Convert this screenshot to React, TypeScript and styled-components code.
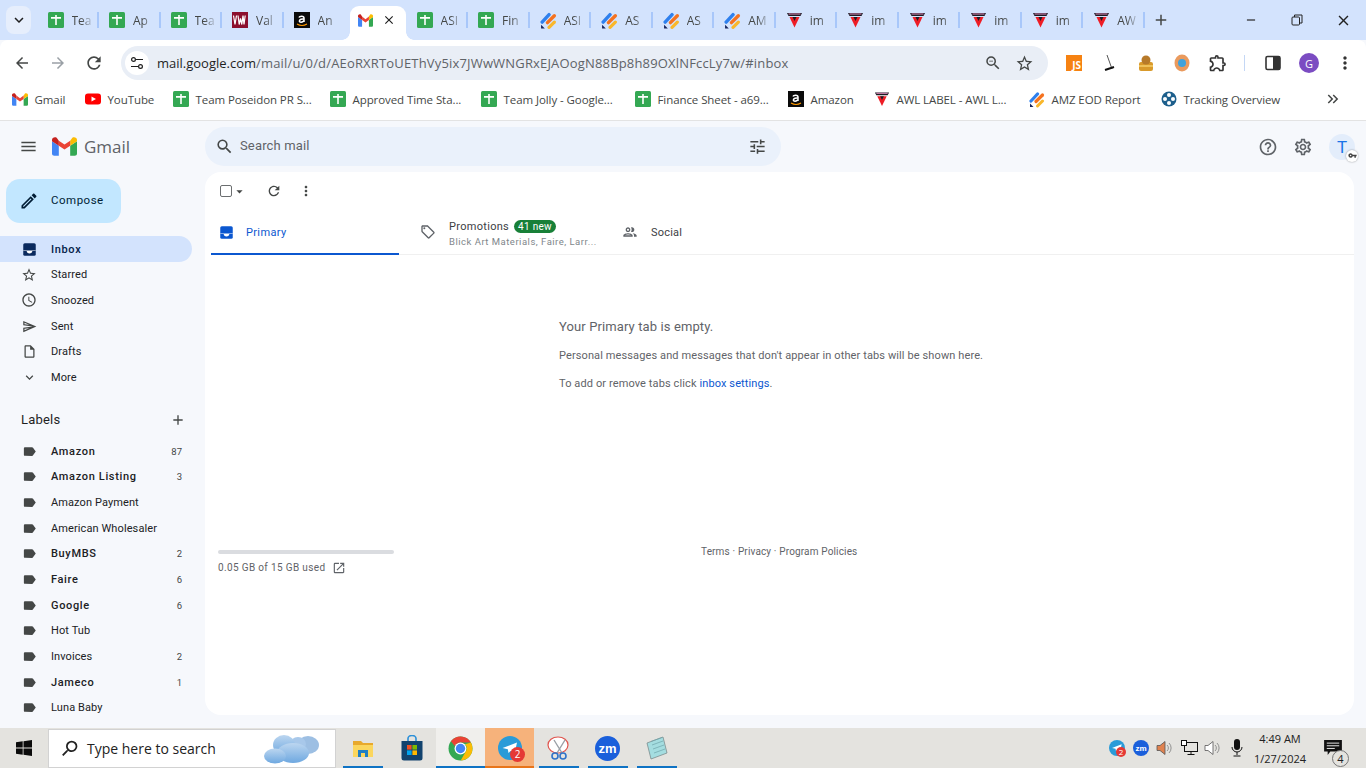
import React from "react";
import styled, { createGlobalStyle } from "styled-components";
import {
  MdAdd,
  MdArrowBack,
  MdArrowDropDown,
  MdArrowForward,
  MdClose,
  MdExpandMore,
  MdHelpOutline,
  MdKeyboardDoubleArrowRight,
  MdLabel,
  MdMenu,
  MdMoreVert,
  MdOpenInNew,
  MdOutlineAccessTime,
  MdOutlineCreate,
  MdOutlineExtension,
  MdOutlineInsertDriveFile,
  MdOutlineLocalOffer,
  MdOutlinePeople,
  MdOutlineSend,
  MdOutlineSettings,
  MdOutlineStarBorder,
  MdOutlineZoomOut,
  MdRefresh,
  MdRemove,
  MdSearch,
  MdStarBorder,
  MdTune,
  MdVpnKey,
} from "react-icons/md";

const GlobalStyle = createGlobalStyle`
  html, body {
    margin: 0;
    padding: 0;
    height: 100%;
    overflow: hidden;
    background: #f6f8fc;
    font-family: "Roboto", "Liberation Sans", sans-serif;
  }
  * { box-sizing: border-box; }
`;

const chromeFont = `"Open Sans", "Noto Sans", sans-serif`;

/* ---------- drawn favicons and logos ---------- */

type IconKind = "sheets" | "vw" | "amazon" | "gmail" | "jira" | "awl" | "youtube" | "tracking";

function GmailLogo({ width, height }: { width: number; height: number }) {
  return (
    <svg width={width} height={height} viewBox="2 3.500 44 38" preserveAspectRatio="none">
      <path fill="#4285f4" d="M6 41h8V21L2 12v25c0 2.2 1.8 4 4 4z" />
      <path fill="#34a853" d="M34 41h8c2.2 0 4-1.800 4-4V12l-12 9z" />
      <path fill="#fbbc04" d="M34 11v10l12-9V9c0-4.200-4.800-6.600-8.200-4.100z" />
      <path fill="#ea4335" d="M14 21V11l10 7.500L34 11v10l-10 7.500z" />
      <path fill="#c5221f" d="M2 9v3l12 9V11L10.200 4.900C6.800 2.400 2 4.800 2 9z" />
    </svg>
  );
}

function Favicon({ kind }: { kind: IconKind }) {
  switch (kind) {
    case "sheets":
      return (
        <svg width="16" height="16" viewBox="0 0 16 16">
          <rect width="16" height="16" rx="1.500" fill="#34a853" />
          <path fill="#fff" d="M7.200 3h1.600v2H13v1.700H8.800V13H7.200V6.700H3V5h4.200z" />
        </svg>
      );
    case "vw":
      return (
        <svg width="16" height="16" viewBox="0 0 16 16">
          <rect width="16" height="16" fill="#8c0f2e" />
          <path
            d="M1.500 3.500l1.500 9 1.500-9M6 3.500l1.200 9 1.300-6 1.300 6 1.200-9M11 3.500l1 9 1.200-9"
            stroke="#fff"
            strokeWidth="1.200"
            fill="none"
          />
        </svg>
      );
    case "amazon":
      return (
        <svg width="16" height="16" viewBox="0 0 16 16">
          <rect width="16" height="16" fill="#0b0b0b" />
          <path
            d="M5 5.500c.4-1.500 5-2 5 .5v4M10 7c-2-.2-4.600.1-4.600 2 0 1.800 3 1.600 4.600-.2"
            stroke="#fff"
            strokeWidth="1.500"
            fill="none"
          />
          <path d="M3 12c3 1.800 7 1.800 10 0" stroke="#f90" strokeWidth="1.100" fill="none" />
        </svg>
      );
    case "gmail":
      return <GmailLogo width={15} height={13} />;
    case "jira":
      return (
        <svg width="17" height="17" viewBox="0 0 16 16">
          <path d="M2 9.500L8.500 2.500" stroke="#2f80ed" strokeWidth="3.200" strokeLinecap="round" />
          <path d="M7 10L13.500 3.500" stroke="#f5721f" strokeWidth="3.200" strokeLinecap="round" />
          <path d="M8.500 14.500l5-5" stroke="#f9b72b" strokeWidth="3" strokeLinecap="round" />
          <path d="M1 15.500V12l3.500 3.500z" fill="#16235a" />
        </svg>
      );
    case "awl":
      return (
        <svg width="17" height="16" viewBox="0 0 17 16">
          <path d="M1 1h15l-1.500 3h-12z" fill="#1c1c24" />
          <path d="M2.500 2h12" stroke="#e78fc0" strokeWidth="1" />
          <path d="M3.500 5h10L8.500 15.500z" fill="#ee1c25" />
          <path d="M6.500 5h4L8.500 9z" fill="#1c1c24" />
        </svg>
      );
    case "youtube":
      return (
        <svg width="16" height="16" viewBox="0 0 16 16">
          <rect y="2.500" width="16" height="11" rx="3" fill="#f00" />
          <path d="M6.500 5.500L11 8l-4.500 2.500z" fill="#fff" />
        </svg>
      );
    case "tracking":
      return (
        <svg width="16" height="16" viewBox="0 0 16 16">
          <circle cx="8" cy="8" r="7.500" fill="#1d5f8c" />
          <circle cx="8" cy="4" r="2" fill="#fff" />
          <circle cx="8" cy="12" r="2" fill="#fff" />
          <circle cx="4" cy="8" r="2" fill="#fff" />
          <circle cx="12" cy="8" r="2" fill="#fff" />
        </svg>
      );
  }
}

function ChromeLogo() {
  return (
    <svg width="25" height="25" viewBox="0 0 24 24">
      <circle cx="12" cy="12" r="11.500" fill="#34a853" />
      <path d="M12 .5a11.500 11.500 0 0 1 10 5.800H12a5.700 5.700 0 0 0-5.300 3.500L2.800 5.100A11.500 11.500 0 0 1 12 .5z" fill="#ea4335" />
      <path d="M22 6.300a11.500 11.500 0 0 1-9.800 17.200l4.700-8.500A5.700 5.700 0 0 0 16.500 8z" fill="#fbbc04" />
      <circle cx="12" cy="12" r="5.700" fill="#fff" />
      <circle cx="12" cy="12" r="4.500" fill="#4285f4" />
    </svg>
  );
}

function ExplorerIcon() {
  return (
    <svg width="24" height="24" viewBox="0 0 24 24">
      <path d="M2 5h8l2 2h10v5H2z" fill="#e8a92c" />
      <path d="M2 9h20v12H2z" fill="#fbd65d" />
      <path d="M7 21v-7h10v7h-3v-4h-4v4z" fill="#1f7fc4" />
    </svg>
  );
}

function StoreIcon() {
  return (
    <svg width="24" height="26" viewBox="0 0 24 26">
      <path d="M8 6V3.500a4 3 0 0 1 8 0V6" stroke="#2a8fd8" strokeWidth="1.600" fill="none" />
      <path d="M1.500 6h21v17a2.500 2.500 0 0 1-2.500 2.500H4A2.500 2.500 0 0 1 1.500 23z" fill="#12436e" />
      <rect x="7" y="10" width="4.600" height="4.600" fill="#f25022" />
      <rect x="12.400" y="10" width="4.600" height="4.600" fill="#7fba00" />
      <rect x="7" y="15.400" width="4.600" height="4.600" fill="#00a4ef" />
      <rect x="12.400" y="15.400" width="4.600" height="4.600" fill="#ffb900" />
    </svg>
  );
}

function SnipIcon() {
  return (
    <svg width="26" height="26" viewBox="0 0 26 26">
      <ellipse cx="12" cy="10" rx="10" ry="8" fill="#fff" stroke="#e0564f" strokeWidth="1.200" />
      <path d="M8 5l8 13M19 5l-8 13" stroke="#9aa0a6" strokeWidth="1.400" />
      <circle cx="9" cy="21" r="3" fill="none" stroke="#2f73c9" strokeWidth="1.600" />
      <circle cx="17" cy="21" r="3" fill="none" stroke="#2f73c9" strokeWidth="1.600" />
    </svg>
  );
}

function NotepadIcon() {
  return (
    <svg width="26" height="26" viewBox="0 0 26 26">
      <path d="M3 8L19 2l4 16-16 6z" fill="#a4dde0" stroke="#7b8d8e" strokeWidth=".8" />
      <path d="M7 6.500L18 2.500M8 10l11-4M9 14l11-4M10 18l11-4" stroke="#6fa5ab" strokeWidth=".7" />
    </svg>
  );
}

function TelegramIcon({ size }: { size: number }) {
  return (
    <svg width={size} height={size} viewBox="0 0 24 24">
      <circle cx="12" cy="12" r="12" fill="#2a9bd8" />
      <path d="M4.500 12L19 6.500 16.500 18l-4-3-2 2-.7-3.800z" fill="#fff" />
    </svg>
  );
}

function CloudsIcon() {
  return (
    <svg width="58" height="34" viewBox="0 0 58 34">
      <defs>
        <linearGradient id="cloud" x1="0" y1="0" x2="0" y2="1">
          <stop offset="0" stopColor="#bcd6f0" />
          <stop offset="1" stopColor="#6ea8e0" />
        </linearGradient>
      </defs>
      <ellipse cx="45" cy="13" rx="11" ry="9" fill="#9dbfe3" />
      <ellipse cx="35" cy="12" rx="8" ry="7" fill="#a8c8ea" />
      <ellipse cx="21" cy="13" rx="11" ry="10" fill="url(#cloud)" />
      <ellipse cx="30" cy="21" rx="16" ry="10" fill="url(#cloud)" />
      <ellipse cx="12" cy="24" rx="11" ry="7.500" fill="url(#cloud)" />
    </svg>
  );
}

function WindowsLogo() {
  return (
    <svg width="16" height="16" viewBox="0 0 16 16">
      <path fill="#0b0b0b" d="M0 2.200l6.700-.9v6.300H0zM7.500 1.200L16 0v7.600H7.500zM0 8.400h6.700v6.300L0 13.800zM7.500 8.400H16V16l-8.500-1.200z" />
    </svg>
  );
}

function SiteTuneIcon() {
  return (
    <svg width="14" height="14" viewBox="0 0 14 14">
      <circle cx="3.500" cy="3.500" r="1.900" fill="none" stroke="#1f1f1f" strokeWidth="1.200" />
      <path d="M6 3.500h7M1 10.500h7" stroke="#1f1f1f" strokeWidth="1.200" />
      <circle cx="10.500" cy="10.500" r="1.900" fill="none" stroke="#1f1f1f" strokeWidth="1.200" />
    </svg>
  );
}

function InboxIcon({ color }: { color: string }) {
  return (
    <svg width="15" height="15" viewBox="0 0 24 24">
      <rect x="2" y="2" width="20" height="20" rx="2.500" fill={color} />
      <path d="M2 14.500h5.500c0 2.500 2 4 4.500 4s4.500-1.500 4.500-4H22v-1H2z" fill="#fff" />
      <path d="M8 14.500h8c0 1.800-1.800 2.800-4 2.800s-4-1-4-2.800z" fill="#fff" />
    </svg>
  );
}

function RestoreIcon() {
  return (
    <svg width="12" height="12" viewBox="0 0 12 12">
      <rect x="1" y="3" width="7.500" height="8" rx="1" fill="none" stroke="#222" />
      <path d="M3.500 3V1h7.500v8h-2.500" fill="none" stroke="#222" />
    </svg>
  );
}

function SpeakerIcon({ color }: { color: string }) {
  return (
    <svg width="18" height="16" viewBox="0 0 18 16">
      <path d="M1 5.500h3L9 1.500v13l-5-4H1z" fill={color} stroke="#555" strokeWidth=".8" />
      <path d="M11 5a4 4 0 0 1 0 6M13 3a7 7 0 0 1 0 10" fill="none" stroke="#888" strokeWidth=".9" />
    </svg>
  );
}

/* ---------- data ---------- */

type TabItem = { kind: IconKind; title: string; active?: boolean; noSep?: boolean };

const tabs: TabItem[] = [
  { kind: "sheets", title: "Tea" },
  { kind: "sheets", title: "Ap" },
  { kind: "sheets", title: "Tea" },
  { kind: "vw", title: "Val" },
  { kind: "amazon", title: "An", noSep: true },
  { kind: "gmail", title: "", active: true, noSep: true },
  { kind: "sheets", title: "ASI" },
  { kind: "sheets", title: "Fin" },
  { kind: "jira", title: "ASI" },
  { kind: "jira", title: "AS" },
  { kind: "jira", title: "AS" },
  { kind: "jira", title: "AM" },
  { kind: "awl", title: "im" },
  { kind: "awl", title: "im" },
  { kind: "awl", title: "im" },
  { kind: "awl", title: "im" },
  { kind: "awl", title: "im" },
  { kind: "awl", title: "AW" },
];

const bookmarks: { kind: IconKind; label: string; width: number }[] = [
  { kind: "gmail", label: "Gmail", width: 73 },
  { kind: "youtube", label: "YouTube", width: 88 },
  { kind: "sheets", label: "Team Poseidon PR S...", width: 157 },
  { kind: "sheets", label: "Approved Time Sta...", width: 151 },
  { kind: "sheets", label: "Team Jolly - Google...", width: 154 },
  { kind: "sheets", label: "Finance Sheet - a69...", width: 153 },
  { kind: "amazon", label: "Amazon", width: 86 },
  { kind: "awl", label: "AWL LABEL - AWL L...", width: 155 },
  { kind: "jira", label: "AMZ EOD Report", width: 132 },
  { kind: "tracking", label: "Tracking Overview", width: 150 },
];

const navItems: { label: string; icon: React.ReactNode; active?: boolean }[] = [
  { label: "Inbox", active: true, icon: <InboxIcon color="#0a2a5e" /> },
  { label: "Starred", icon: <MdOutlineStarBorder size={16} /> },
  { label: "Snoozed", icon: <MdOutlineAccessTime size={16} /> },
  { label: "Sent", icon: <MdOutlineSend size={15} /> },
  { label: "Drafts", icon: <MdOutlineInsertDriveFile size={15} /> },
  { label: "More", icon: <MdExpandMore size={15} /> },
];

const labels: { name: string; count?: string; bold?: boolean }[] = [
  { name: "Amazon", count: "87", bold: true },
  { name: "Amazon Listing", count: "3", bold: true },
  { name: "Amazon Payment" },
  { name: "American Wholesaler" },
  { name: "BuyMBS", count: "2", bold: true },
  { name: "Faire", count: "6", bold: true },
  { name: "Google", count: "6", bold: true },
  { name: "Hot Tub" },
  { name: "Invoices", count: "2" },
  { name: "Jameco", count: "1", bold: true },
  { name: "Luna Baby" },
  { name: "Leads" },
];

/* ---------- app ---------- */

export default function App() {
  return (
    <Page>
      <GlobalStyle />

      <TabStrip>
        <TabSearch>
          <MdExpandMore size={18} />
        </TabSearch>
        {tabs.map((tab, i) => (
          <Tab key={i} $active={tab.active} $noSep={tab.noSep}>
            {tab.active && <ActiveShape />}
            <TabIcon>
              <Favicon kind={tab.kind} />
            </TabIcon>
            {tab.active ? (
              <TabClose>
                <MdClose size={14} />
              </TabClose>
            ) : (
              <TabTitle>{tab.title}</TabTitle>
            )}
          </Tab>
        ))}
        <NewTab>
          <MdAdd size={18} />
        </NewTab>
        <WindowControls>
          <WindowButton>
            <MdRemove size={14} />
          </WindowButton>
          <WindowButton>
            <RestoreIcon />
          </WindowButton>
          <WindowButton>
            <MdClose size={17} />
          </WindowButton>
        </WindowControls>
      </TabStrip>

      <Toolbar>
        <NavButton>
          <MdArrowBack size={18} />
        </NavButton>
        <NavButton $disabled>
          <MdArrowForward size={18} />
        </NavButton>
        <NavButton>
          <MdRefresh size={20} />
        </NavButton>
        <Omnibox>
          <SiteInfo>
            <SiteTuneIcon />
          </SiteInfo>
          <Url>
            <strong>mail.google.com</strong>/mail/u/0/d/AEoRXRToUEThVy5ix7JWwWNGRxEJAOogN88Bp8h89OXlNFccLy7w/#inbox
          </Url>
          <OmniActions>
            <MdOutlineZoomOut size={18} />
            <MdStarBorder size={19} />
          </OmniActions>
        </Omnibox>
        <ExtButtons>
          <ExtButton>
            <JsBadge>JS</JsBadge>
          </ExtButton>
          <ExtButton>
            <svg width="16" height="18" viewBox="0 0 16 18">
              <path d="M5 1l5 14" stroke="#555" strokeWidth="1" />
              <path d="M3 16l9-3" stroke="#111" strokeWidth="2" />
            </svg>
          </ExtButton>
          <ExtButton>
            <svg width="18" height="18" viewBox="0 0 18 18">
              <rect x="2" y="8" width="14" height="9" rx="2" fill="#d99a2b" />
              <circle cx="9" cy="6" r="4.500" fill="#b77a2a" />
              <rect x="2" y="11" width="14" height="2" fill="#efc15a" />
            </svg>
          </ExtButton>
          <ExtButton>
            <svg width="16" height="18" viewBox="0 0 16 18">
              <ellipse cx="8" cy="9" rx="7.500" ry="8.500" fill="#ea9a5d" />
              <circle cx="8" cy="9" r="4" fill="#3fa2dc" />
            </svg>
          </ExtButton>
          <ExtButton>
            <MdOutlineExtension size={20} />
          </ExtButton>
          <ToolbarSep />
          <ExtButton>
            <svg width="16" height="16" viewBox="0 0 16 16">
              <rect x="1" y="1.500" width="14" height="13" rx="1.500" fill="none" stroke="#333" strokeWidth="1.600" />
              <rect x="8" y="1.500" width="7" height="13" fill="#333" />
            </svg>
          </ExtButton>
          <ExtButton>
            <ProfileCircle>G</ProfileCircle>
          </ExtButton>
          <ExtButton>
            <MdMoreVert size={20} />
          </ExtButton>
        </ExtButtons>
      </Toolbar>

      <BookmarkBar>
        {bookmarks.map((b) => (
          <Bookmark key={b.label} $width={b.width}>
            <Favicon kind={b.kind} />
            <BookmarkLabel>{b.label}</BookmarkLabel>
          </Bookmark>
        ))}
        <BookmarkMore>
          <MdKeyboardDoubleArrowRight size={18} />
        </BookmarkMore>
      </BookmarkBar>

      <GmailShell>
        <GmailHeader>
          <Brand>
            <HeaderIcon>
              <MdMenu size={19} />
            </HeaderIcon>
            <GmailLogo width={25} height={19} />
            <BrandName>Gmail</BrandName>
          </Brand>
          <SearchBar>
            <MdSearch size={19} />
            <SearchText>Search mail</SearchText>
            <MdTune size={19} />
          </SearchBar>
          <HeaderRight>
            <HeaderButton>
              <MdHelpOutline size={20} />
            </HeaderButton>
            <HeaderButton>
              <MdOutlineSettings size={20} />
            </HeaderButton>
            <Avatar>
              T
              <AvatarKey>
                <MdVpnKey size={9} />
              </AvatarKey>
            </Avatar>
          </HeaderRight>
        </GmailHeader>

        <GmailBody>
          <Sidebar>
            <Compose>
              <MdOutlineCreate size={20} />
              <span>Compose</span>
            </Compose>
            <NavList>
              {navItems.map((item) => (
                <NavRow key={item.label} $active={item.active}>
                  <NavIcon>{item.icon}</NavIcon>
                  <NavLabel $bold={item.active}>{item.label}</NavLabel>
                </NavRow>
              ))}
            </NavList>
            <LabelsHeader>
              <span>Labels</span>
              <MdAdd size={16} />
            </LabelsHeader>
            <NavList>
              {labels.map((label) => (
                <NavRow key={label.name}>
                  <NavIcon>
                    <MdLabel size={15} color="#444746" />
                  </NavIcon>
                  <NavLabel $bold={label.bold}>{label.name}</NavLabel>
                  {label.count && <Count>{label.count}</Count>}
                </NavRow>
              ))}
            </NavList>
          </Sidebar>

          <MainPanel>
            <MailToolbar>
              <CheckBox />
              <MdArrowDropDown size={15} color="#444746" />
              <ToolIcon $gap={19}>
                <MdRefresh size={16} />
              </ToolIcon>
              <ToolIcon $gap={16}>
                <MdMoreVert size={16} />
              </ToolIcon>
            </MailToolbar>

            <CategoryTabs>
              <PrimaryTab>
                <InboxIcon color="#0b57d0" />
                <span>Primary</span>
              </PrimaryTab>
              <PromotionsTab>
                <MdOutlineLocalOffer size={16} />
                <PromoText>
                  <PromoTitle>
                    Promotions <NewBadge>41 new</NewBadge>
                  </PromoTitle>
                  <PromoSub>Blick Art Materials, Faire, Larr...</PromoSub>
                </PromoText>
              </PromotionsTab>
              <SocialTab>
                <MdOutlinePeople size={16} />
                <span>Social</span>
              </SocialTab>
            </CategoryTabs>

            <EmptyState>
              <EmptyTitle>Your Primary tab is empty.</EmptyTitle>
              <EmptyLine>Personal messages and messages that don't appear in other tabs will be shown here.</EmptyLine>
              <EmptyLine>
                To add or remove tabs click <EmptyLink>inbox settings</EmptyLink>.
              </EmptyLine>
            </EmptyState>

            <PanelFooter>
              <Storage>
                <StorageBar />
                <StorageText>
                  0.05 GB of 15 GB used
                  <MdOpenInNew size={14} />
                </StorageText>
              </Storage>
              <Policies>Terms · Privacy · Program Policies</Policies>
            </PanelFooter>
          </MainPanel>
        </GmailBody>
      </GmailShell>

      <Taskbar>
        <StartButton>
          <WindowsLogo />
        </StartButton>
        <TaskSearch>
          <MdSearch size={21} />
          <TaskSearchText>Type here to search</TaskSearchText>
          <CloudsIcon />
        </TaskSearch>
        <TaskIcons>
          <TaskIcon $state="open">
            <ExplorerIcon />
          </TaskIcon>
          <TaskIcon>
            <StoreIcon />
          </TaskIcon>
          <TaskIcon $state="focused">
            <ChromeLogo />
          </TaskIcon>
          <TaskIcon $state="alert">
            <TelegramIcon size={24} />
            <RedBadge>2</RedBadge>
          </TaskIcon>
          <TaskIcon $state="open">
            <SnipIcon />
          </TaskIcon>
          <TaskIcon $state="open">
            <ZoomBadge $size={25}>zm</ZoomBadge>
          </TaskIcon>
          <TaskIcon $state="open">
            <NotepadIcon />
          </TaskIcon>
        </TaskIcons>
        <Tray>
          <TrayIcon>
            <TelegramIcon size={16} />
            <TrayRedBadge>2</TrayRedBadge>
          </TrayIcon>
          <TrayIcon>
            <ZoomBadge $size={16}>zm</ZoomBadge>
          </TrayIcon>
          <TrayIcon>
            <SpeakerIcon color="#e0824f" />
          </TrayIcon>
          <TrayIcon>
            <svg width="17" height="16" viewBox="0 0 17 16">
              <rect x="3.500" y="2.500" width="13" height="9" fill="none" stroke="#111" />
              <path d="M10 11.500v3M6.500 14.500h7" stroke="#111" />
              <rect x=".5" y=".5" width="5" height="5" fill="#fff" stroke="#111" />
            </svg>
          </TrayIcon>
          <TrayIcon>
            <SpeakerIcon color="#fff" />
          </TrayIcon>
          <TrayIcon>
            <svg width="12" height="18" viewBox="0 0 12 18">
              <rect x="3" y="0" width="6" height="11" rx="3" fill="#111" />
              <path d="M1 8a5 5 0 0 0 10 0M6 13v3M2.500 17h7" stroke="#111" fill="none" />
            </svg>
          </TrayIcon>
          <Clock>
            <span>4:49 AM</span>
            <span>1/27/2024</span>
          </Clock>
          <Notifications>
            <svg width="18" height="16" viewBox="0 0 20 18">
              <path d="M0 0h20v13H7l-3 4v-4H0z" fill="#111" />
              <path d="M3 3.500h14M3 6.500h14M3 9.500h9" stroke="#fff" />
            </svg>
            <NotifCount>4</NotifCount>
          </Notifications>
        </Tray>
      </Taskbar>
    </Page>
  );
}

/* ---------- chrome: tab strip ---------- */

const Page = styled.div`
  display: flex;
  flex-direction: column;
  width: 1366px;
  height: 768px;
  overflow: hidden;
`;

const TabStrip = styled.div`
  display: flex;
  align-items: stretch;
  height: 40px;
  background: #d3e3fd;
  font-family: ${chromeFont};
`;

const TabSearch = styled.div`
  display: grid;
  place-items: center;
  width: 25px;
  height: 28px;
  margin: 6px 6.500px 0 6px;
  border-radius: 8px;
  background: #e6eefc;
  color: #1f1f1f;
`;

const Tab = styled.div<{ $active?: boolean; $noSep?: boolean }>`
  position: relative;
  display: flex;
  align-items: center;
  flex: 0 0 61.530px;
  padding-left: ${({ $active }) => ($active ? "13px" : "10px")};
  padding-right: ${({ $active }) => ($active ? "11px" : "0")};

  &::after {
    content: "";
    display: ${({ $noSep }) => ($noSep ? "none" : "block")};
    position: absolute;
    right: 0;
    top: 12px;
    width: 2px;
    height: 16px;
    background: #a8c7fa;
  }
`;

const ActiveShape = styled.div`
  position: absolute;
  left: 5px;
  right: 1px;
  top: 6px;
  bottom: 0;
  background: #fff;
  border-radius: 9px 9px 0 0;

  &::before,
  &::after {
    content: "";
    position: absolute;
    bottom: 0;
    width: 8px;
    height: 8px;
    background: radial-gradient(circle at var(--cx) 0, #d3e3fd 7.500px, #fff 8px);
  }
  &::before {
    --cx: 0;
    left: -8px;
  }
  &::after {
    --cx: 100%;
    right: -8px;
  }
`;

const TabIcon = styled.span`
  position: relative;
  display: flex;
  align-items: center;
  flex: none;
  width: 17px;
`;

const TabTitle = styled.span`
  width: 26px;
  margin-left: 7px;
  overflow: hidden;
  white-space: nowrap;
  font-size: 12px;
  color: #444746;
  -webkit-mask-image: linear-gradient(90deg, #000 9px, rgba(0, 0, 0, 0.25) 19px);
  mask-image: linear-gradient(90deg, #000 9px, rgba(0, 0, 0, 0.25) 19px);
`;

const TabClose = styled.span`
  position: relative;
  display: flex;
  margin-left: auto;
  color: #1f1f1f;
`;

const NewTab = styled.div`
  display: flex;
  align-items: center;
  margin-left: 7px;
  color: #444746;
`;

const WindowControls = styled.div`
  display: flex;
  margin-left: auto;
`;

const WindowButton = styled.div`
  display: grid;
  place-items: center;
  width: 46px;
  color: #222;
`;

/* ---------- chrome: toolbar ---------- */

const Toolbar = styled.div`
  display: flex;
  align-items: center;
  height: 40px;
  padding: 6px 0 0 4px;
  background: #fff;
  border-radius: 8px 8px 0 0;
  font-family: ${chromeFont};
`;

const NavButton = styled.div<{ $disabled?: boolean }>`
  display: grid;
  place-items: center;
  width: 36px;
  height: 34px;
  color: ${({ $disabled }) => ($disabled ? "#9aa0a6" : "#444746")};
`;

const Omnibox = styled.div`
  display: flex;
  align-items: center;
  width: 927px;
  height: 34px;
  margin-left: 9px;
  padding: 0 14px 0 4px;
  border-radius: 17px;
  background: #e9eef6;
`;

const SiteInfo = styled.div`
  display: grid;
  place-items: center;
  width: 24px;
  height: 24px;
  border-radius: 50%;
  background: #fff;
  color: #1f1f1f;
`;

const Url = styled.div`
  margin-left: 8px;
  font-size: 13px;
  letter-spacing: 0.170px;
  color: #5f6368;
  white-space: nowrap;

  strong {
    font-weight: 400;
    letter-spacing: 0;
    color: #1f1f1f;
  }
`;

const OmniActions = styled.div`
  display: flex;
  align-items: center;
  gap: 13px;
  margin-left: auto;
  color: #444746;
`;

const ExtButtons = styled.div`
  display: flex;
  align-items: center;
  margin-left: 8px;
`;

const ExtButton = styled.div`
  display: grid;
  place-items: center;
  width: 36px;
  height: 32px;
  color: #333;
`;

const ToolbarSep = styled.div`
  width: 1px;
  height: 16px;
  margin: 0 10px 0 8px;
  background: #c4d7f5;
`;

const JsBadge = styled.div`
  display: flex;
  align-items: flex-end;
  justify-content: flex-end;
  width: 16px;
  height: 16px;
  padding: 0 1px 1px 0;
  background: #f68212;
  color: #fff;
  font-size: 10px;
  font-weight: 700;
  line-height: 1;
`;

const ProfileCircle = styled.div`
  display: grid;
  place-items: center;
  width: 20px;
  height: 20px;
  border-radius: 50%;
  background: #7b4cc2;
  color: #fff;
  font-size: 11px;
`;

/* ---------- chrome: bookmarks ---------- */

const BookmarkBar = styled.div`
  display: flex;
  align-items: center;
  height: 41px;
  padding: 0 0 2px 12px;
  background: #fff;
  border-bottom: 1px solid #e3e3e3;
  font-family: ${chromeFont};
`;

const Bookmark = styled.div<{ $width: number }>`
  display: flex;
  align-items: center;
  gap: 6.500px;
  flex: 0 0 ${({ $width }) => $width}px;

  svg {
    flex: 0 0 16px;
  }
`;

const BookmarkLabel = styled.span`
  font-size: 11.500px;
  letter-spacing: -0.080px;
  color: #444746;
  white-space: nowrap;
`;

const BookmarkMore = styled.div`
  display: flex;
  margin-left: 13px;
  color: #444746;
`;

/* ---------- gmail: header ---------- */

const GmailShell = styled.div`
  display: flex;
  flex-direction: column;
  flex: 1;
  min-height: 0;
  background: #f6f8fc;
`;

const GmailHeader = styled.div`
  display: flex;
  align-items: flex-start;
  height: 51px;
  flex: none;
`;

const Brand = styled.div`
  display: flex;
  align-items: center;
  width: 205px;
  height: 51px;
  padding-left: 19px;
  flex: none;
`;

const HeaderIcon = styled.div`
  display: flex;
  width: 33px;
  color: #444746;
`;

const BrandName = styled.span`
  margin-left: 7px;
  font-family: "Open Sans", sans-serif;
  font-size: 17px;
  color: #5f6368;
`;

const SearchBar = styled.div`
  display: flex;
  align-items: center;
  width: 576px;
  height: 39px;
  margin-top: 6px;
  padding: 0 14px 0 10px;
  border-radius: 20px;
  background: #eaf1fb;
  color: #444746;
`;

const SearchText = styled.span`
  flex: 1;
  margin: 0 0 2px 6px;
  font-size: 13px;
  letter-spacing: 0.150px;
  color: #5f6368;
`;

const HeaderRight = styled.div`
  display: flex;
  align-items: center;
  margin-left: auto;
  height: 51px;
  padding-right: 11px;
`;

const HeaderButton = styled.div`
  display: grid;
  place-items: center;
  width: 35px;
  color: #5f6368;
`;

const Avatar = styled.div`
  position: relative;
  display: grid;
  place-items: center;
  width: 26px;
  height: 26px;
  margin-left: 9px;
  border-radius: 50%;
  background: #e3edfb;
  color: #1a73e8;
  font-size: 17px;
`;

const AvatarKey = styled.span`
  position: absolute;
  right: -3px;
  bottom: -2px;
  display: grid;
  place-items: center;
  width: 12px;
  height: 12px;
  border-radius: 50%;
  background: #fff;
  color: #444;
  box-shadow: 0 0 2px rgba(0, 0, 0, 0.4);
`;

/* ---------- gmail: sidebar ---------- */

const GmailBody = styled.div`
  display: flex;
  flex: 1;
  min-height: 0;
`;

const Sidebar = styled.div`
  flex: 0 0 205px;
  height: 100%;
  overflow: hidden;
`;

const Compose = styled.div`
  display: flex;
  align-items: center;
  gap: 12px;
  width: 115px;
  height: 44px;
  margin: 7px 0 13.300px 6px;
  padding: 0 0 2px 13px;
  border-radius: 14px;
  background: #c2e7ff;
  font-size: 11.500px;
  letter-spacing: 0.500px;
  color: #001d35;

  svg {
    margin-top: 2px;
  }
`;

const NavList = styled.div`
  display: flex;
  flex-direction: column;
`;

const NavRow = styled.div<{ $active?: boolean }>`
  display: flex;
  align-items: center;
  width: 192px;
  height: 25.670px;
  padding: 0 10px 0 21px;
  border-radius: 0 13px 13px 0;
  color: ${({ $active }) => ($active ? "#041e49" : "#202124")};
  background: ${({ $active }) => ($active ? "#d3e3fd" : "transparent")};
`;

const NavIcon = styled.span`
  display: flex;
  justify-content: center;
  width: 16px;
  margin-right: 14px;
  color: #444746;
`;

const NavLabel = styled.span<{ $bold?: boolean }>`
  flex: 1;
  font-size: 11px;
  letter-spacing: ${({ $bold }) => ($bold ? "0.650px" : "0.100px")};
  font-weight: ${({ $bold }) => ($bold ? 500 : 400)};
  white-space: nowrap;
`;

const Count = styled.span`
  font-size: 9.500px;
  color: #444746;
`;

const LabelsHeader = styled.div`
  display: flex;
  align-items: center;
  justify-content: space-between;
  width: 192px;
  height: 20px;
  margin: 20px 0 8.200px;
  padding: 0 6px 0 21px;
  font-size: 13px;
  letter-spacing: 0.200px;
  color: #1f1f1f;

  span {
    margin-bottom: 2px;
  }

  svg {
    color: #444746;
  }
`;

/* ---------- gmail: main panel ---------- */

const MainPanel = styled.div`
  flex: 0 0 1149px;
  margin-bottom: 13px;
  border-radius: 16px;
  background: #fff;
`;

const MailToolbar = styled.div`
  display: flex;
  align-items: center;
  height: 38px;
  padding-left: 15px;
`;

const CheckBox = styled.span`
  width: 12px;
  height: 12px;
  border: 1.500px solid #6b6e70;
  border-radius: 2px;
`;

const ToolIcon = styled.span<{ $gap: number }>`
  display: flex;
  margin-left: ${({ $gap }) => $gap}px;
  color: #444746;
`;

const CategoryTabs = styled.div`
  display: flex;
  height: 45px;
  margin-left: 6px;
  border-bottom: 1px solid #f0f0f0;
  font-size: 11px;
  letter-spacing: 0.200px;
`;

const PrimaryTab = styled.div`
  display: flex;
  align-items: center;
  gap: 12px;
  width: 188px;
  height: 45px;
  padding: 1px 0 0 8px;
  border-bottom: 2px solid #0b57d0;
  color: #0b57d0;
  letter-spacing: 0.350px;
`;

const PromotionsTab = styled.div`
  display: flex;
  align-items: center;
  gap: 13px;
  width: 223px;
  padding-left: 21px;
  color: #5f6368;
`;

const PromoText = styled.div`
  display: flex;
  flex-direction: column;
  gap: 3px;
  padding-top: 2px;
`;

const PromoTitle = styled.div`
  display: flex;
  align-items: center;
  gap: 5px;
  letter-spacing: 0.300px;
  color: #3c4043;
`;

const NewBadge = styled.span`
  height: 13px;
  padding: 0 4px;
  border-radius: 7px;
  background: #188038;
  color: #fff;
  font-size: 10px;
  line-height: 13px;
`;

const PromoSub = styled.div`
  font-size: 9.500px;
  letter-spacing: 0.500px;
  color: #80868b;
  white-space: nowrap;
`;

const SocialTab = styled.div`
  display: flex;
  align-items: center;
  gap: 13px;
  color: #3c4043;

  svg {
    color: #5f6368;
  }
`;

const EmptyState = styled.div`
  display: flex;
  flex-direction: column;
  height: 295px;
  padding: 64px 0 0 354px;
`;

const EmptyTitle = styled.div`
  font-size: 13px;
  letter-spacing: 0.110px;
  color: #5f6368;
`;

const EmptyLine = styled.div`
  margin-top: 15px;
  font-size: 11px;
  letter-spacing: 0.110px;
  color: #5f6368;
`;

const EmptyLink = styled.span`
  color: #0b57d0;
`;

const PanelFooter = styled.div`
  display: flex;
  padding-left: 13px;
`;

const Storage = styled.div`
  width: 176px;
`;

const StorageBar = styled.div`
  height: 3.500px;
  border-radius: 2px;
  background: #dadce0;
`;

const StorageText = styled.div`
  display: flex;
  align-items: center;
  gap: 7px;
  margin-top: 7px;
  font-size: 10px;
  letter-spacing: 0.350px;
  color: #5f6368;
`;

const Policies = styled.div`
  margin: -4px 0 0 307px;
  font-size: 10px;
  letter-spacing: 0.150px;
  color: #5f6368;
`;

/* ---------- windows taskbar ---------- */

const Taskbar = styled.div`
  display: flex;
  align-items: stretch;
  flex: 0 0 40px;
  height: 40px;
  background: #e4e3df;
  font-family: ${chromeFont};
`;

const StartButton = styled.div`
  display: grid;
  place-items: center;
  width: 48px;
`;

const TaskSearch = styled.div`
  display: flex;
  align-items: center;
  width: 288px;
  height: 39px;
  margin-top: 1px;
  padding: 0 14px 0 10px;
  background: #fff;
  border: 1px solid #d2d2d2;
  color: #222;

  svg:first-child {
    transform: scaleX(-1);
  }
`;

const TaskSearchText = styled.span`
  flex: 1;
  margin-left: 7px;
  font-size: 14px;
  color: #222;
`;

const TaskIcons = styled.div`
  display: flex;
  margin-left: 2px;
`;

type TaskState = "open" | "focused" | "alert";

const TaskIcon = styled.div<{ $state?: TaskState }>`
  position: relative;
  display: grid;
  place-items: center;
  width: 49px;
  background: ${({ $state }) => {
    switch ($state) {
      case "focused":
        return "#f0efec";
      case "alert":
        return "#f6b27b";
      default:
        return "transparent";
    }
  }};

  &::after {
    content: "";
    display: ${({ $state }) => ($state ? "block" : "none")};
    position: absolute;
    bottom: 0;
    left: ${({ $state }) => ($state === "open" ? "5px" : "0")};
    right: ${({ $state }) => ($state === "open" ? "4px" : "0")};
    height: 2px;
    background: ${({ $state }) => ($state === "alert" ? "#e8751a" : "#0f73c4")};
  }
`;

const ZoomBadge = styled.div<{ $size: number }>`
  display: grid;
  place-items: center;
  width: ${({ $size }) => $size}px;
  height: ${({ $size }) => $size}px;
  border-radius: 50%;
  background: #1a5fdb;
  color: #fff;
  font-family: "Liberation Sans", sans-serif;
  font-size: ${({ $size }) => Math.round($size * 0.5)}px;
  font-weight: 700;
`;

const RedBadge = styled.span`
  position: absolute;
  left: 25px;
  top: 19px;
  width: 15px;
  height: 15px;
  border-radius: 50%;
  background: #e53935;
  color: #fff;
  font-size: 10px;
  line-height: 15px;
  text-align: center;
`;

const Tray = styled.div`
  display: flex;
  align-items: center;
  margin-left: auto;
  padding-right: 5px;
`;

const TrayIcon = styled.div`
  position: relative;
  display: grid;
  place-items: center;
  width: 24px;
`;

const TrayRedBadge = styled.span`
  position: absolute;
  left: 11px;
  top: 7px;
  width: 10px;
  height: 10px;
  border-radius: 50%;
  background: #e53935;
  color: #fff;
  font-size: 8px;
  line-height: 10px;
  text-align: center;
`;

const Clock = styled.div`
  display: flex;
  flex-direction: column;
  align-items: center;
  gap: 5px;
  width: 62px;
  font-size: 11px;
  line-height: 15px;
  color: #222;
  white-space: nowrap;
`;

const Notifications = styled.div`
  position: relative;
  display: grid;
  place-items: center;
  width: 50px;
  padding-right: 6px;
`;

const NotifCount = styled.span`
  position: absolute;
  left: 21px;
  top: 10px;
  width: 17px;
  height: 17px;
  border: 1px solid #777;
  border-radius: 50%;
  background: #e4e3df;
  color: #222;
  font-size: 11px;
  line-height: 15px;
  text-align: center;
`;
